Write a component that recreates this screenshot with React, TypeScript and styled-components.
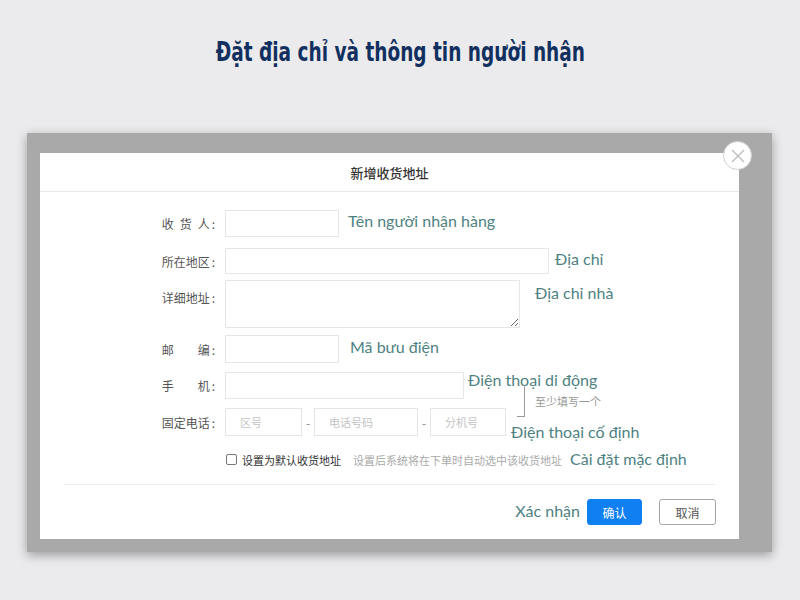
import React from "react";
import styled, { createGlobalStyle } from "styled-components";

const Global = createGlobalStyle`
  html, body { margin: 0; padding: 0; }
  body {
    background: #ebebed;
    font-family: "Noto Sans CJK SC", "Noto Sans", sans-serif;
  }
  * { box-sizing: border-box; }
`;

const Page = styled.div`
  width: 800px;
  height: 600px;
  display: flex;
  flex-direction: column;
  overflow: hidden;
`;

const Title = styled.h1`
  margin: 33px 0 0;
  height: 38px;
  text-align: center;
  font-family: "Liberation Sans Narrow", "DejaVu Sans Condensed", "Liberation Sans", sans-serif;
  font-weight: 700;
  font-size: 27px;
  line-height: 38px;
  color: #12305f;
`;

const TitleText = styled.span`
  display: inline-block;
  transform: scaleX(0.762);
  transform-origin: center;
  white-space: nowrap;
`;

const Frame = styled.div`
  margin: 62px 0 0 27px;
  width: 745px;
  height: 419px;
  padding: 20px 33px 13px 13px;
  background: #a9a9a9;
  box-shadow: 0 3px 10px rgba(0, 0, 0, 0.35);
`;

const Dialog = styled.div`
  position: relative;
  width: 699px;
  height: 386px;
  background: #ffffff;
  display: flex;
  flex-direction: column;
`;

const CloseBtn = styled.div`
  position: absolute;
  top: -12px;
  right: -13px;
  width: 29px;
  height: 29px;
  border-radius: 50%;
  background: #fff;
  border: 1.5px solid #cfcfcf;
  display: flex;
  align-items: center;
  justify-content: center;
`;

const Header = styled.div`
  height: 39px;
  border-bottom: 1px solid #e9e9e9;
  display: flex;
  align-items: center;
  justify-content: center;
  font-size: 13px;
  font-weight: 500;
  color: #333;
`;

const Form = styled.div`
  padding-top: 18px;
  display: flex;
  flex-direction: column;
`;

const Row = styled.div<{ $mt?: number; $top?: boolean }>`
  display: flex;
  align-items: ${(p) => (p.$top ? "flex-start" : "center")};
  margin-top: ${(p) => p.$mt ?? 0}px;
`;

const LabelCell = styled.div<{ $pt?: number }>`
  width: 185px;
  padding-right: 10px;
  padding-top: ${(p) => p.$pt ?? 0}px;
  display: flex;
  justify-content: flex-end;
  align-items: center;
  font-size: 12px;
  color: #555;
`;

const Chars = styled.span`
  width: 48px;
  display: flex;
  justify-content: space-between;
`;

const Colon = styled.span`
  margin-left: 2px;
`;

const Input = styled.div<{ $w: number; $h?: number }>`
  width: ${(p) => p.$w}px;
  height: ${(p) => p.$h ?? 27}px;
  border: 1px solid #e6e6e6;
  background: #fff;
  display: flex;
  align-items: center;
  padding-left: 14px;
  font-size: 11px;
  color: #c4c4c4;
  flex-shrink: 0;
`;

const TextArea = styled.textarea`
  width: 295px;
  height: 48px;
  border: 1px solid #e6e6e6;
  resize: both;
  outline: none;
  margin: 0;
  flex-shrink: 0;
`;

const Dash = styled.span`
  width: 12px;
  text-align: center;
  font-size: 12px;
  color: #888;
`;

const Note = styled.span<{ $ml: number; $dy?: number }>`
  margin-left: ${(p) => p.$ml}px;
  font-family: Lato, "Open Sans", sans-serif;
  font-size: 16px;
  color: #4e8282;
  white-space: nowrap;
  position: relative;
  top: ${(p) => p.$dy ?? 0}px;
`;

const PhoneGroup = styled.div`
  position: relative;
  display: flex;
  flex-direction: column;
`;

const Callout = styled.div`
  position: absolute;
  left: 477px;
  top: 22px;
  display: flex;
  align-items: center;
`;

const Bracket = styled.div`
  width: 8px;
  height: 32px;
  border-right: 1.5px solid #9a9a9a;
  border-bottom: 1.5px solid #9a9a9a;
`;

const Hint = styled.span`
  margin-left: 10px;
  margin-top: -1px;
  font-size: 11px;
  color: #999;
`;

const CheckRow = styled.div`
  display: flex;
  align-items: center;
  height: 23px;
  margin-top: 12px;
  padding-left: 186px;
`;

const Box = styled.span`
  width: 11px;
  height: 11px;
  border: 1px solid #777;
  border-radius: 2px;
  margin-right: 5px;
`;

const CheckText = styled.span`
  font-size: 11px;
  color: #333;
`;

const CheckHint = styled.span`
  margin-left: 12px;
  font-size: 11px;
  color: #aaa;
`;

const Divider = styled.div`
  margin: 13px 24px 0;
  height: 1px;
  background: #ececec;
`;

const Footer = styled.div`
  display: flex;
  align-items: center;
  justify-content: flex-end;
  padding: 14px 23px 0 0;
`;

const Btn = styled.div<{ $primary?: boolean }>`
  height: 26px;
  width: ${(p) => (p.$primary ? 55 : 57)}px;
  margin-left: ${(p) => (p.$primary ? 7 : 17)}px;
  border-radius: 3px;
  display: flex;
  align-items: center;
  justify-content: center;
  font-size: 12px;
  background: ${(p) => (p.$primary ? "#0f7ff2" : "#fff")};
  color: ${(p) => (p.$primary ? "#fff" : "#555")};
  border: 1px solid ${(p) => (p.$primary ? "#0f7ff2" : "#a8a8a8")};
`;

const FooterNote = styled.span`
  font-family: Lato, "Open Sans", sans-serif;
  font-size: 16px;
  color: #4e8282;
  position: relative;
  top: -2px;
`;

const Label = ({ text, pt }: { text: string; pt?: number }) => (
  <LabelCell $pt={pt}>
    <Chars>
      {text.split("").map((c, i) => (
        <span key={i}>{c}</span>
      ))}
    </Chars>
    <Colon>:</Colon>
  </LabelCell>
);

export default function App() {
  return (
    <Page>
      <Global />
      <Title>
        <TitleText>Đặt địa chỉ và thông tin người nhận</TitleText>
      </Title>
      <Frame>
        <Dialog>
          <CloseBtn>
            <svg width="14" height="14" viewBox="0 0 14 14">
              <path d="M1 1 L13 13 M13 1 L1 13" stroke="#bdbdbd" strokeWidth="1.4" fill="none" />
            </svg>
          </CloseBtn>
          <Header>新增收货地址</Header>
          <Form>
            <Row>
              <Label text="收货人" />
              <Input $w={114} />
              <Note $ml={9} $dy={-3}>Tên người nhận hàng</Note>
            </Row>
            <Row $mt={11}>
              <Label text="所在地区" />
              <Input $w={324} $h={26} />
              <Note $ml={6} $dy={-3}>Địa chỉ</Note>
            </Row>
            <Row $mt={6} $top>
              <Label text="详细地址" pt={9} />
              <TextArea />
              <Note $ml={15} $dy={3}>Địa chỉ nhà</Note>
            </Row>
            <Row $mt={7}>
              <Label text="邮编" />
              <Input $w={114} $h={28} />
              <Note $ml={11} $dy={-3}>Mã bưu điện</Note>
            </Row>
            <PhoneGroup>
              <Row $mt={9}>
                <Label text="手机" />
                <Input $w={239} />
                <Note $ml={4} $dy={-6}>Điện thoại di động</Note>
              </Row>
              <Row $mt={9}>
                <Label text="固定电话" />
                <Input $w={77} $h={28}>区号</Input>
                <Dash>-</Dash>
                <Input $w={104} $h={28}>电话号码</Input>
                <Dash>-</Dash>
                <Input $w={76} $h={28}>分机号</Input>
                <Note $ml={5} $dy={9}>Điện thoại cố định</Note>
              </Row>
              <Callout>
                <Bracket />
                <Hint>至少填写一个</Hint>
              </Callout>
            </PhoneGroup>
            <CheckRow>
              <Box />
              <CheckText>设置为默认收货地址</CheckText>
              <CheckHint>设置后系统将在下单时自动选中该收货地址</CheckHint>
              <Note $ml={8} $dy={-1}>Cài đặt mặc định</Note>
            </CheckRow>
          </Form>
          <Divider />
          <Footer>
            <FooterNote>Xác nhận</FooterNote>
            <Btn $primary>确认</Btn>
            <Btn>取消</Btn>
          </Footer>
        </Dialog>
      </Frame>
    </Page>
  );
}
